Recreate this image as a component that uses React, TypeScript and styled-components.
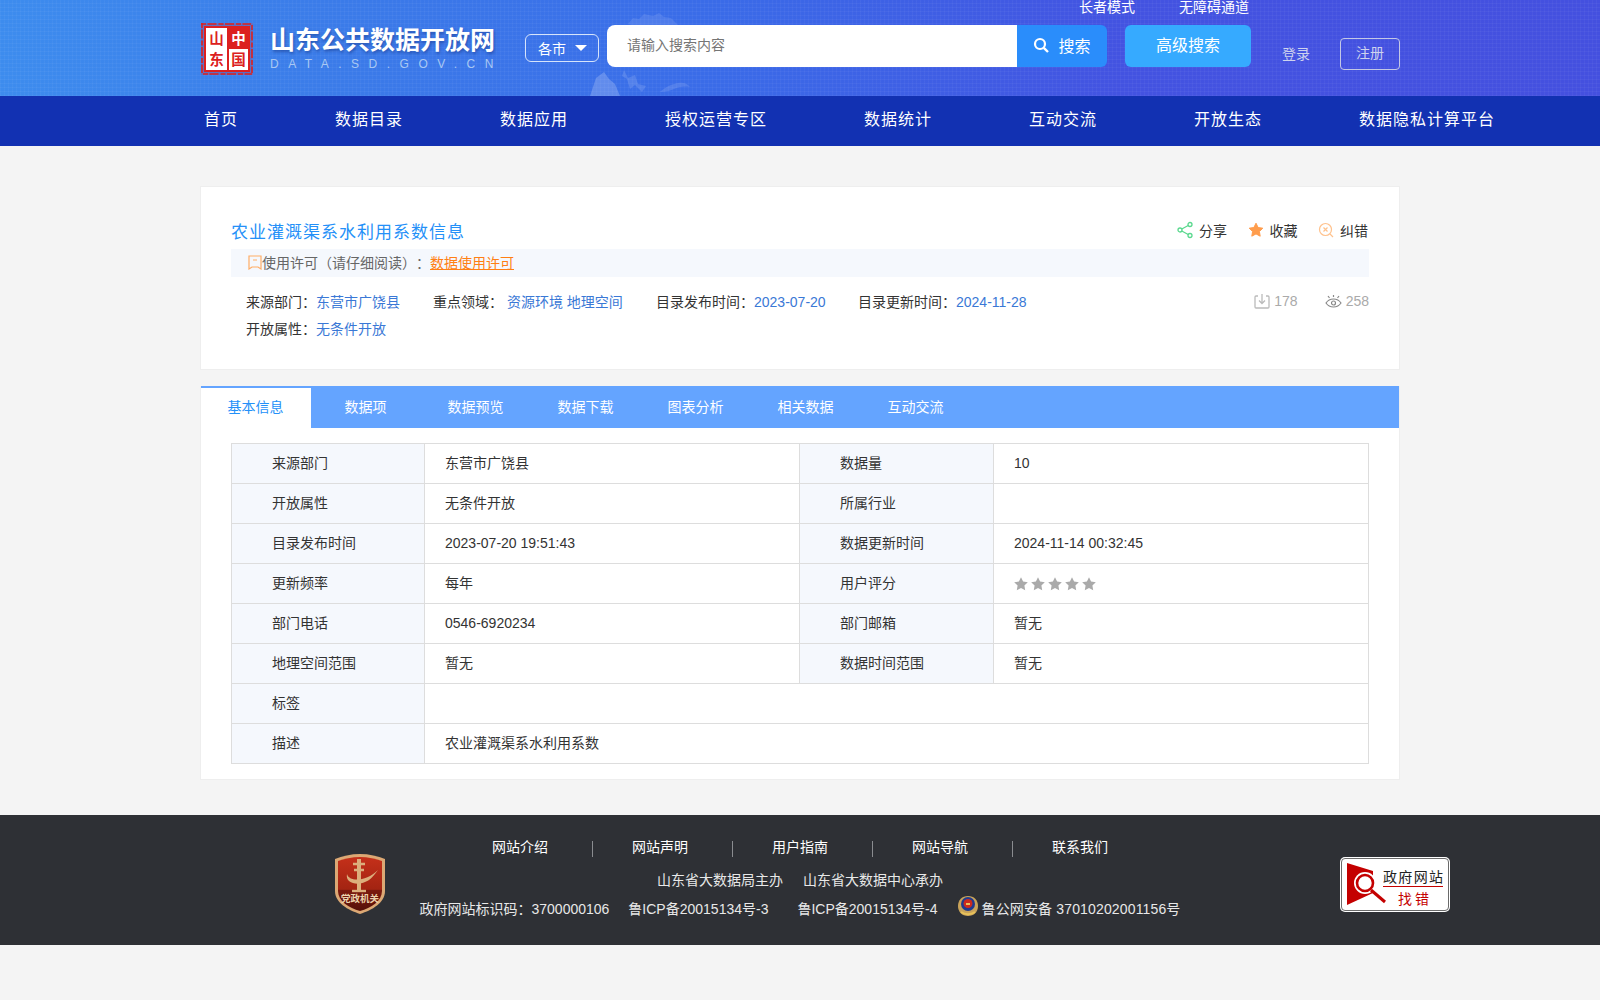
import * as React from "react";
import styled, { createGlobalStyle } from "styled-components";

const GlobalStyle = createGlobalStyle`
  html, body {
    margin: 0;
    padding: 0;
    background: #f4f4f4;
    font-family: "Liberation Sans", "Noto Sans CJK SC", sans-serif;
    font-size: 14px;
    color: #333;
  }
  * { box-sizing: border-box; }
  a { text-decoration: none; color: inherit; }
`;

const Page = styled.div`
  width: 1600px;
  height: 1000px;
  overflow: hidden;
  background: #f4f4f4;
`;

const Header = styled.header`
  position: relative;
  height: 96px;
  background:
    repeating-linear-gradient(90deg, rgba(255, 255, 255, 0.035) 0 1px, transparent 1px 4px),
    repeating-linear-gradient(0deg, rgba(255, 255, 255, 0.035) 0 1px, transparent 1px 4px),
    linear-gradient(90deg, #3d8cee 0%, #3b7ce9 20%, #3a6be8 45%, #4353e1 70%, #4450df 100%);
`;

const Mountain = styled.svg`
  position: absolute;
  left: 560px;
  top: 0;
  width: 240px;
  height: 96px;
`;

const HeaderInner = styled.div`
  position: relative;
  width: 1200px;
  margin: 0 auto;
`;

const TopLinks = styled.div`
  display: flex;
  justify-content: flex-end;
  gap: 44px;
  height: 25px;
  padding-right: 151px;
  font-size: 14px;
  line-height: 15px;
  color: #fff;
`;

const MainRow = styled.div`
  display: flex;
  align-items: flex-start;
`;

const LogoBox = styled.div`
  display: flex;
  margin-top: -3px;
  width: 325px;
`;

const Brand = styled.div`
  margin: 4px 0 0 16px;
`;

const BrandName = styled.div`
  font-size: 25px;
  line-height: 29px;
  font-weight: 700;
  color: #fff;
  white-space: nowrap;
  text-shadow: 1px 2px 3px rgba(20, 50, 130, 0.5);
`;

const BrandSub = styled.div`
  margin-top: 2px;
  font-size: 12px;
  line-height: 14px;
  letter-spacing: 9.5px;
  color: #a9c8f3;
  white-space: nowrap;
`;

const CitySelect = styled.div`
  display: flex;
  align-items: center;
  width: 74px;
  height: 28px;
  margin-top: 9px;
  padding-left: 12px;
  border: 1px solid #d6e4fb;
  border-radius: 6px;
  color: #fff;
  font-size: 14px;
`;

const Caret = styled.span`
  width: 0;
  height: 0;
  margin-left: 9px;
  border-left: 6px solid transparent;
  border-right: 6px solid transparent;
  border-top: 6px solid #fff;
`;

const SearchBox = styled.div`
  display: flex;
  width: 500px;
  height: 42px;
  margin-left: 8px;
`;

const SearchInput = styled.div`
  width: 410px;
  padding-left: 20px;
  background: #fff;
  border-radius: 8px 0 0 8px;
  font-size: 14px;
  line-height: 41px;
  color: #757575;
`;

const SearchButton = styled.div`
  display: flex;
  align-items: center;
  justify-content: center;
  gap: 9px;
  width: 90px;
  padding-bottom: 2px;
  background: #2a8dfb;
  border-radius: 0 6px 6px 0;
  font-size: 16px;
  color: #fff;
`;

const AdvancedButton = styled.div`
  width: 126px;
  height: 42px;
  margin-left: 18px;
  background: #36aaff;
  border-radius: 6px;
  font-size: 16px;
  line-height: 41px;
  text-align: center;
  color: #fff;
`;

const LoginLink = styled.div`
  margin: 18px 0 0 31px;
  font-size: 14px;
  line-height: 22px;
  color: #ced3ee;
`;

const RegisterLink = styled.div`
  width: 60px;
  height: 32px;
  margin: 13px 0 0 30px;
  border: 1px solid #c3c8e6;
  border-radius: 4px;
  font-size: 14px;
  line-height: 29px;
  text-align: center;
  color: #ced3ee;
`;

const Nav = styled.nav`
  height: 50px;
  background: #1231b2;
`;

const NavInner = styled.div`
  display: flex;
  gap: 97px;
  width: 1200px;
  margin: 0 auto;
  padding-left: 4px;
`;

const NavItem = styled.a`
  font-size: 16px;
  letter-spacing: 1px;
  line-height: 47px;
  color: #fff;
  white-space: nowrap;
`;

const Main = styled.main`
  width: 1200px;
  margin: 40px auto 0;
`;

const InfoCard = styled.section`
  height: 184px;
  padding: 28px 30px 0;
  background: #fff;
  border: 1px solid #eee;
`;

const TitleRow = styled.div`
  display: flex;
  justify-content: space-between;
  align-items: center;
  height: 30px;
`;

const Title = styled.h1`
  margin: 0;
  font-size: 17px;
  font-weight: 400;
  letter-spacing: 1px;
  color: #2490f8;
`;

const Actions = styled.div`
  display: flex;
  align-items: center;
  gap: 20.5px;
  padding-right: 1px;
`;

const Action = styled.span`
  display: flex;
  align-items: center;
  gap: 6px;
  color: #333;
`;

const LicenseBar = styled.div`
  display: flex;
  align-items: center;
  height: 28px;
  margin-top: 4px;
  padding: 0 0 2px 17px;
  background: #f5f8fd;
  color: #666;
  text-spacing-trim: space-all;
`;

const LicenseLink = styled.a`
  color: #ff7f14;
  text-decoration: underline;
`;

const MetaRow = styled.div<{ $top: number }>`
  display: flex;
  align-items: center;
  height: 20px;
  margin-top: ${p => p.$top}px;
  padding-left: 15px;
`;

const MetaItem = styled.span<{ $width?: number }>`
  ${p => (p.$width ? `width: ${p.$width}px;` : "")}
  white-space: nowrap;
`;

const MetaValue = styled.span`
  color: #3a78d6;
`;

const Stats = styled.div`
  display: flex;
  gap: 27px;
  margin-left: auto;
  color: #aaa;
`;

const Stat = styled.span`
  display: flex;
  align-items: center;
  gap: 4px;
`;

const Panel = styled.section`
  height: 394px;
  margin-top: 16px;
  background: #fff;
  border: 1px solid #eee;
  border-width: 0 1px 1px;
`;

const Tabs = styled.div`
  display: flex;
  height: 42px;
  padding-top: 2px;
  background: #64a4ff;
`;

const Tab = styled.div<{ $active?: boolean }>`
  width: 110px;
  padding-right: 1px;
  text-align: center;
  font-size: 14px;
  line-height: 38px;
  color: ${p => (p.$active ? "#2490f8" : "#fff")};
  background: ${p => (p.$active ? "#fff" : "transparent")};
`;

const DetailTable = styled.table`
  width: 1137px;
  margin: 15px 0 0 30px;
  border-collapse: collapse;
  table-layout: fixed;
`;

const LabelCell = styled.th`
  height: 40px;
  padding: 0 0 3px 40px;
  background: #f5f8fd;
  border: 1px solid #ddd;
  font-weight: 400;
  text-align: left;
  color: #333;
`;

const ValueCell = styled.td<{ $numeric?: boolean }>`
  height: 40px;
  padding: 0 0 ${p => (p.$numeric ? 1 : 3)}px 20px;
  background: #fff;
  border: 1px solid #ddd;
  color: #333;
`;

const Stars = styled.div`
  display: flex;
  gap: 1px;
  margin: 3px 0 0 -1px;
`;

const Footer = styled.footer`
  height: 130px;
  margin-top: 35px;
  background: #2e3035;
`;

const FooterInner = styled.div`
  display: flex;
  align-items: flex-start;
  width: 1116px;
  margin-left: 334px;
`;

const BadgeBox = styled.div`
  flex: none;
  width: 52px;
  height: 62px;
  margin-top: 38px;
`;

const FooterCenter = styled.div`
  flex: none;
  width: 758px;
  margin-left: 35px;
  padding-top: 22px;
  color: #fff;
`;

const FooterLinks = styled.div`
  display: flex;
  justify-content: center;
`;

const FooterLink = styled.a<{ $last?: boolean }>`
  position: relative;
  width: 140px;
  text-align: center;
  line-height: 20px;
  color: #fff;

  &::after {
    content: "";
    display: ${p => (p.$last ? "none" : "block")};
    position: absolute;
    right: -3px;
    top: 4px;
    width: 1px;
    height: 16px;
    background: #8a8c90;
  }
`;

const FooterLine = styled.div<{ $top: number }>`
  display: flex;
  justify-content: center;
  align-items: center;
  height: 20px;
  margin-top: ${p => p.$top}px;
  line-height: 20px;
  white-space: nowrap;
  color: #e8e8e8;
`;

const FooterText = styled.span<{ $left?: number; $wide?: boolean }>`
  margin-left: ${p => p.$left || 0}px;
  letter-spacing: ${p => (p.$wide ? "0.15px" : "normal")};
`;

const EmblemBox = styled.span`
  display: block;
  width: 20px;
  height: 22px;
  margin: 0 0 6px 20px;
`;

const ErrorBox = styled.div`
  flex: none;
  width: 110px;
  height: 55px;
  margin: 42px 0 0 161px;
`;

const navItems = ["首页", "数据目录", "数据应用", "授权运营专区", "数据统计", "互动交流", "开放生态", "数据隐私计算平台"];
const tabItems = ["基本信息", "数据项", "数据预览", "数据下载", "图表分析", "相关数据", "互动交流"];
const footerLinks = ["网站介绍", "网站声明", "用户指南", "网站导航", "联系我们"];

const starPath = "M8 1.2l2.1 4.3 4.7.7-3.4 3.3.8 4.7L8 11.9l-4.2 2.3.8-4.7L1.2 6.2l4.7-.7z";

const Seal = () => (
  <svg width="54" height="54" viewBox="0 0 54 54">
    <rect x="1" y="1" width="52" height="52" fill="#e02424" opacity="0.2" />
    <path d="M1 2h50M2 1v50M3 52h49M52 3v48" stroke="#d92222" strokeWidth="1.6" strokeDasharray="5 1.5 9 2" fill="none" />
    <rect x="4" y="4" width="46" height="46" fill="#dc2020" />
    <rect x="6" y="6" width="21" height="42" fill="#fff" />
    <rect x="29" y="27" width="19" height="21" fill="#fff" />
    <text x="16.5" y="22" textAnchor="middle" fontSize="14.5" fontWeight="700" fill="#dc2020" fontFamily="Noto Sans CJK SC">山</text>
    <text x="16.5" y="43" textAnchor="middle" fontSize="14.5" fontWeight="700" fill="#dc2020" fontFamily="Noto Sans CJK SC">东</text>
    <text x="38.5" y="21.5" textAnchor="middle" fontSize="14.5" fontWeight="700" fill="#fff" fontFamily="Noto Sans CJK SC">中</text>
    <text x="38.5" y="43" textAnchor="middle" fontSize="14.5" fontWeight="700" fill="#dc2020" fontFamily="Noto Sans CJK SC">国</text>
  </svg>
);

const ShieldBadge = () => (
  <svg width="52" height="62" viewBox="0 0 52 62" style={{ display: "block" }}>
    <defs>
      <linearGradient id="shieldFill" x1="0" y1="0" x2="0" y2="1">
        <stop offset="0" stopColor="#c5301a" />
        <stop offset="0.6" stopColor="#a32412" />
        <stop offset="0.61" stopColor="#7c1a0e" />
        <stop offset="1" stopColor="#55110a" />
      </linearGradient>
    </defs>
    <path d="M26 1C35 1 44 3 51 6v32c0 12-13 19-25 23C14 57 1 50 1 38V6c7-3 16-5 25-5z" fill="#dca874" />
    <path d="M26 4c8 0 16 2 22 4v30c0 10-11 17-22 20C15 55 4 48 4 38V8c6-2 14-4 22-4z" fill="url(#shieldFill)" />
    <path d="M25 6v31" stroke="#dcae7c" strokeWidth="4" />
    <path d="M19 11h12M20 17h10" stroke="#dcae7c" strokeWidth="2.6" />
    <path d="M13 21c2 8 19 8 31-4-6 8-8 10-13 12-8 4-20 1-18-8z" fill="#dcae7c" />
    <path d="M18 38h14" stroke="#dcae7c" strokeWidth="2.4" />
    <text x="26" y="49" textAnchor="middle" fontSize="9.5" fontWeight="700" fill="#ecd3ac" fontFamily="Noto Sans CJK SC">党政机关</text>
  </svg>
);

const FindErrorBadge = () => (
  <svg width="110" height="55" viewBox="0 0 110 55" style={{ display: "block" }}>
    <rect x="0" y="0" width="110" height="55" rx="5" fill="#fff" />
    <rect x="1.5" y="1.5" width="107" height="52" rx="3.5" fill="#fff" stroke="#444" strokeWidth="0.8" />
    <path d="M7 6l26 8v22L7 48z" fill="#c40000" />
    <circle cx="25" cy="26" r="11" fill="#fff" />
    <circle cx="25" cy="26" r="8" fill="#fff" stroke="#c40000" strokeWidth="2.6" />
    <path d="M31 33l14 12" stroke="#c40000" strokeWidth="3" />
    <text x="43" y="25" fontSize="14" textLength="60" fill="#222" fontFamily="Noto Sans CJK SC">政府网站</text>
    <path d="M43 29.5h60" stroke="#c40000" strokeWidth="1.2" />
    <text x="58" y="47" fontSize="14" textLength="31" fill="#c40000" fontFamily="Noto Sans CJK SC">找错</text>
  </svg>
);

const Police = () => (
  <svg width="20" height="22" viewBox="0 0 20 22" style={{ display: "block" }}>
    <path d="M10 21C4 21 0 17 0 11 0 5 4 1 10 1s10 4 10 10c0 6-4 10-10 10z" fill="#c9a35a" />
    <circle cx="10" cy="9" r="7" fill="#1f3b8f" />
    <circle cx="10" cy="8.5" r="4.5" fill="#cc2a1e" />
    <path d="M8 8h4v2H8z" fill="#e8c25a" />
    <path d="M3 17c4 3 10 3 14 0" stroke="#e8c25a" strokeWidth="2" fill="none" />
  </svg>
);

const ScoreStars = () => (
  <Stars>
    {[0, 1, 2, 3, 4].map(i => (
      <svg key={i} width="16" height="16" viewBox="0 0 16 16">
        <path d={starPath} fill="#aaa" />
      </svg>
    ))}
  </Stars>
);

const App = () => (
  <Page>
    <GlobalStyle />
    <Header>
      <Mountain viewBox="0 0 240 96">
        <path d="M68 24l5-6 6 1 5-5 9 2 6-3 5 4 7 1 6 6 5 5-8-2-7 3-6-3-9 2-6-4-8 2z" fill="#fff" opacity="0.1" />
        <path d="M30 96l6-18 8-6 5 7 6 5 5 12z" fill="#fff" opacity="0.2" />
        <path d="M64 70l4 8 7-3 3 9 8 2-4 6-7-7-5 4-3-10-5-3z" fill="#fff" opacity="0.13" />
        <path d="M100 92c5-5 12-8 18-9 5-1 9 0 12 4-6-1-12 0-16 2-4 2-9 3-14 3z" fill="#fff" opacity="0.12" />
      </Mountain>
      <HeaderInner>
        <TopLinks>
          <span>长者模式</span>
          <span>无障碍通道</span>
        </TopLinks>
        <MainRow>
          <LogoBox>
            <Seal />
            <Brand>
              <BrandName>山东公共数据开放网</BrandName>
              <BrandSub>DATA.SD.GOV.CN</BrandSub>
            </Brand>
          </LogoBox>
          <CitySelect>
            各市
            <Caret />
          </CitySelect>
          <SearchBox>
            <SearchInput>请输入搜索内容</SearchInput>
            <SearchButton>
              <svg width="16" height="16" viewBox="0 0 16 16">
                <circle cx="7" cy="7" r="5" fill="none" stroke="#fff" strokeWidth="2.2" />
                <path d="M10.8 10.8L15 15" stroke="#fff" strokeWidth="2.4" />
              </svg>
              搜索
            </SearchButton>
          </SearchBox>
          <AdvancedButton>高级搜索</AdvancedButton>
          <LoginLink>登录</LoginLink>
          <RegisterLink>注册</RegisterLink>
        </MainRow>
      </HeaderInner>
    </Header>
    <Nav>
      <NavInner>
        {navItems.map(item => (
          <NavItem key={item}>{item}</NavItem>
        ))}
      </NavInner>
    </Nav>
    <Main>
      <InfoCard>
        <TitleRow>
          <Title>农业灌溉渠系水利用系数信息</Title>
          <Actions>
            <Action>
              <svg width="16" height="18" viewBox="0 0 16 18" fill="none" stroke="#5ad88e" strokeWidth="1.3">
                <circle cx="13" cy="3.5" r="2" />
                <circle cx="3" cy="9" r="2" />
                <circle cx="13" cy="14.5" r="2" />
                <path d="M4.8 8l6.4-3.5M4.8 10l6.4 3.5" />
              </svg>
              分享
            </Action>
            <Action>
              <svg width="16" height="16" viewBox="0 0 16 16">
                <path d={starPath} fill="#ff9d4d" stroke="#ff9d4d" strokeLinejoin="round" />
              </svg>
              收藏
            </Action>
            <Action>
              <svg width="16" height="16" viewBox="0 0 16 16" fill="none" stroke="#ffc28d" strokeWidth="1.2">
                <circle cx="7.5" cy="7.5" r="6" />
                <path d="M5.5 5.5l4 4M9.5 5.5l-4 4M12 12l3 3" />
              </svg>
              纠错
            </Action>
          </Actions>
        </TitleRow>
        <LicenseBar>
          <svg width="14" height="15" viewBox="0 0 14 15" fill="none" stroke="#ffad66" strokeWidth="1.2">
            <path d="M1 1h12v13l-3-2H4l-3 2zM5 5h4" />
          </svg>
          使用许可（请仔细阅读）：
          <LicenseLink>数据使用许可</LicenseLink>
        </LicenseBar>
        <MetaRow $top={14}>
          <MetaItem $width={187}>
            来源部门：<MetaValue>东营市广饶县</MetaValue>
          </MetaItem>
          <MetaItem $width={223}>
            重点领域：&nbsp;<MetaValue>资源环境 地理空间</MetaValue>
          </MetaItem>
          <MetaItem $width={202}>
            目录发布时间：<MetaValue>2023-07-20</MetaValue>
          </MetaItem>
          <MetaItem>
            目录更新时间：<MetaValue>2024-11-28</MetaValue>
          </MetaItem>
          <Stats>
            <Stat>
              <svg width="16" height="16" viewBox="0 0 16 16" fill="none" stroke="#bbb" strokeWidth="1.3">
                <path d="M4 3H2a1 1 0 0 0-1 1v10a1 1 0 0 0 1 1h12a1 1 0 0 0 1-1V4a1 1 0 0 0-1-1h-2M8 1v9M5 7.5l3 3 3-3" />
              </svg>
              178
            </Stat>
            <Stat>
              <svg width="17" height="16" viewBox="0 0 17 16" fill="none" stroke="#888" strokeWidth="1.2">
                <path d="M1 10c2-3 4.5-4 7.5-4s5.5 1 7.5 4c-2 3-4.5 4-7.5 4S3 13 1 10z" />
                <circle cx="8.5" cy="10" r="2" />
                <path d="M3 3l1.5 2M14 3l-1.5 2M8.5 2v2" />
              </svg>
              258
            </Stat>
          </Stats>
        </MetaRow>
        <MetaRow $top={7}>
          <MetaItem>
            开放属性：<MetaValue>无条件开放</MetaValue>
          </MetaItem>
        </MetaRow>
      </InfoCard>
      <Panel>
        <Tabs>
          {tabItems.map((item, i) => (
            <Tab key={item} $active={i === 0}>
              {item}
            </Tab>
          ))}
        </Tabs>
        <DetailTable>
          <colgroup>
            <col style={{ width: 193 }} />
            <col style={{ width: 375 }} />
            <col style={{ width: 194 }} />
            <col style={{ width: 375 }} />
          </colgroup>
          <tbody>
            <tr>
              <LabelCell>来源部门</LabelCell>
              <ValueCell>东营市广饶县</ValueCell>
              <LabelCell>数据量</LabelCell>
              <ValueCell $numeric>10</ValueCell>
            </tr>
            <tr>
              <LabelCell>开放属性</LabelCell>
              <ValueCell>无条件开放</ValueCell>
              <LabelCell>所属行业</LabelCell>
              <ValueCell />
            </tr>
            <tr>
              <LabelCell>目录发布时间</LabelCell>
              <ValueCell $numeric>2023-07-20 19:51:43</ValueCell>
              <LabelCell>数据更新时间</LabelCell>
              <ValueCell $numeric>2024-11-14 00:32:45</ValueCell>
            </tr>
            <tr>
              <LabelCell>更新频率</LabelCell>
              <ValueCell>每年</ValueCell>
              <LabelCell>用户评分</LabelCell>
              <ValueCell>
                <ScoreStars />
              </ValueCell>
            </tr>
            <tr>
              <LabelCell>部门电话</LabelCell>
              <ValueCell $numeric>0546-6920234</ValueCell>
              <LabelCell>部门邮箱</LabelCell>
              <ValueCell>暂无</ValueCell>
            </tr>
            <tr>
              <LabelCell>地理空间范围</LabelCell>
              <ValueCell>暂无</ValueCell>
              <LabelCell>数据时间范围</LabelCell>
              <ValueCell>暂无</ValueCell>
            </tr>
            <tr>
              <LabelCell>标签</LabelCell>
              <ValueCell colSpan={3} />
            </tr>
            <tr>
              <LabelCell>描述</LabelCell>
              <ValueCell colSpan={3}>农业灌溉渠系水利用系数</ValueCell>
            </tr>
          </tbody>
        </DetailTable>
      </Panel>
    </Main>
    <Footer>
      <FooterInner>
        <BadgeBox>
          <ShieldBadge />
        </BadgeBox>
        <FooterCenter>
          <FooterLinks>
            {footerLinks.map((item, i) => (
              <FooterLink key={item} $last={i === footerLinks.length - 1}>
                {item}
              </FooterLink>
            ))}
          </FooterLinks>
          <FooterLine $top={13}>
            <FooterText>山东省大数据局主办</FooterText>
            <FooterText $left={20}>山东省大数据中心承办</FooterText>
          </FooterLine>
          <FooterLine $top={9}>
            <FooterText>政府网站标识码：3700000106</FooterText>
            <FooterText $left={19}>鲁ICP备20015134号-3</FooterText>
            <FooterText $left={29}>鲁ICP备20015134号-4</FooterText>
            <EmblemBox>
              <Police />
            </EmblemBox>
            <FooterText $left={4} $wide>
              鲁公网安备 37010202001156号
            </FooterText>
          </FooterLine>
        </FooterCenter>
        <ErrorBox>
          <FindErrorBadge />
        </ErrorBox>
      </FooterInner>
    </Footer>
  </Page>
);

export default App;
